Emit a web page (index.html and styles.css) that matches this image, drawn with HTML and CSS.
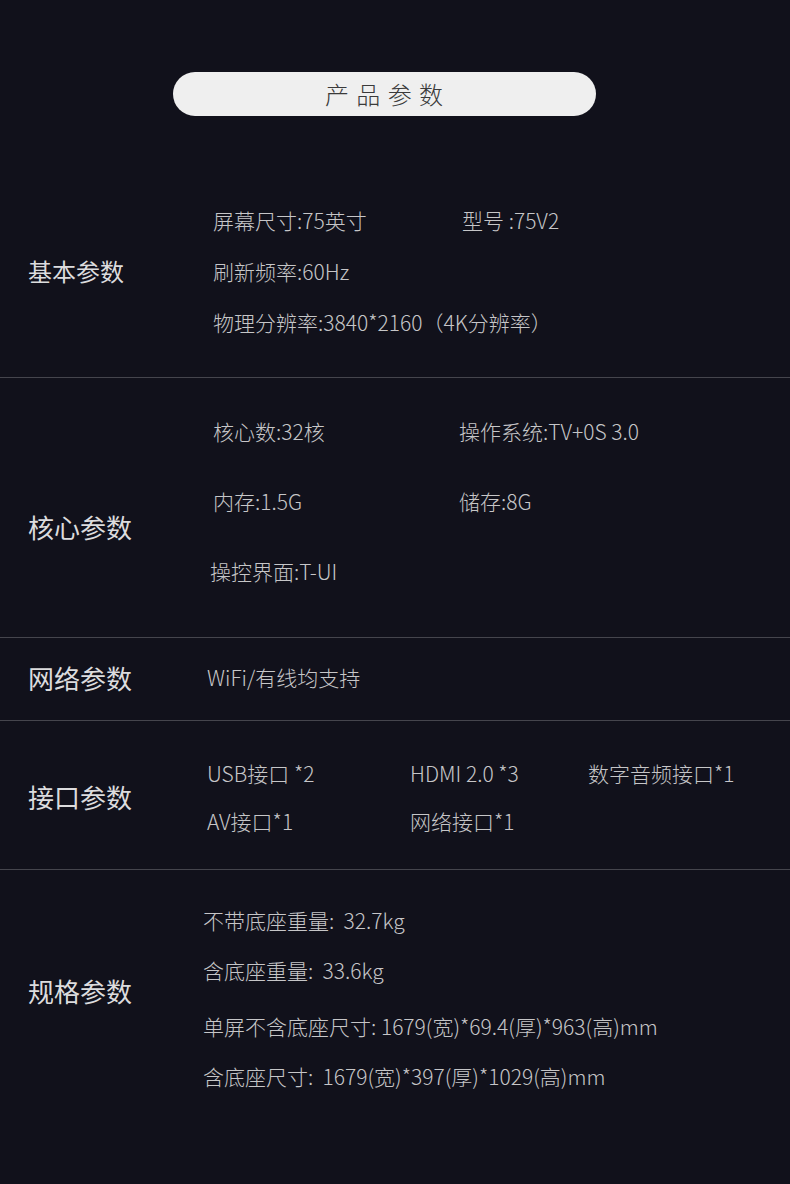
FILE: index.html
```html
<!DOCTYPE html>
<html lang="zh-CN">
<head>
<meta charset="utf-8">
<title>产品参数</title>
<link rel="stylesheet" href="styles.css">
</head>
<body>
<div class="page">
  <div class="pill">产 品 参 数</div>

  <section class="sec sec-basic">
    <div class="label label-sm">基本参数</div>
    <div class="content grid-basic">
      <div class="val">屏幕尺寸:75英寸</div>
      <div class="val">型号 :75V2</div>
      <div class="val span2">刷新频率:60Hz</div>
      <div class="val span2">物理分辨率:3840*2160（4K分辨率）</div>
    </div>
  </section>

  <section class="sec sec-core">
    <div class="label">核心参数</div>
    <div class="content grid-core">
      <div class="val">核心数:32核</div>
      <div class="val">操作系统:TV+0S 3.0</div>
      <div class="val">内存:1.5G</div>
      <div class="val">储存:8G</div>
      <div class="val span2 shift-l">操控界面:T-UI</div>
    </div>
  </section>

  <section class="sec sec-net">
    <div class="label">网络参数</div>
    <div class="content">
      <div class="val">WiFi/有线均支持</div>
    </div>
  </section>

  <section class="sec sec-port">
    <div class="label">接口参数</div>
    <div class="content grid-port">
      <div class="val">USB接口 *2</div>
      <div class="val">HDMI 2.0 *3</div>
      <div class="val">数字音频接口*1</div>
      <div class="val">AV接口*1</div>
      <div class="val">网络接口*1</div>
    </div>
  </section>

  <section class="sec sec-spec">
    <div class="label">规格参数</div>
    <div class="content list-spec">
      <div class="val">不带底座重量:&nbsp;&nbsp;32.7kg</div>
      <div class="val">含底座重量:&nbsp;&nbsp;33.6kg</div>
      <div class="val gap-top">单屏不含底座尺寸: 1679(宽)*69.4(厚)*963(高)mm</div>
      <div class="val">含底座尺寸:&nbsp;&nbsp;1679(宽)*397(厚)*1029(高)mm</div>
    </div>
  </section>
</div>
</body>
</html>
```

FILE: styles.css
```css
html, body {
  margin: 0;
  padding: 0;
  background: #11111b;
}

body {
  font-family: "Noto Sans CJK SC", "Noto Sans", sans-serif;
  color: #c6c6c8;
}

.page {
  width: 790px;
  min-height: 1184px;
  padding-top: 72px;
  box-sizing: border-box;
}

.pill {
  margin-left: 173px;
  width: 423px;
  height: 44px;
  border-radius: 22px;
  background: #efefef;
  color: #3a3a3a;
  font-size: 24px;
  font-weight: 300;
  line-height: 44px;
  text-align: center;
  letter-spacing: 1px;
}

.sec {
  display: flex;
  align-items: center;
  border-bottom: 1px solid #45454d;
}

.label {
  width: 179px;
  padding-left: 28px;
  flex: none;
  font-size: 26px;
  font-weight: 400;
  color: #dcdcde;
  line-height: 36px;
}

.label-sm {
  font-size: 24px;
}

.content {
  flex: 1;
}

.val {
  font-size: 21px;
  font-weight: 300;
  white-space: nowrap;
}

.span2 {
  grid-column: 1 / span 2;
}

/* 基本参数 */
.sec-basic {
  padding: 78px 0 30px;
}
.grid-basic {
  padding-left: 6px;
  display: grid;
  grid-template-columns: 249px auto;
  grid-auto-rows: 51px;
  align-items: center;
}

/* 核心参数 */
.sec-core {
  padding: 18px 0 31px;
}
.sec-core .label {
  padding-top: 52px;
}
.grid-core {
  padding-left: 6px;
  display: grid;
  grid-template-columns: 246px auto;
  grid-auto-rows: 70px;
  align-items: center;
}
.shift-l {
  margin-left: -3px;
}

/* 网络参数 */
.sec-net {
  padding: 14px 0 17px;
}
.sec-net .val {
  line-height: 51px;
}

/* 接口参数 */
.sec-port {
  padding: 28px 0 24px;
}
.grid-port {
  display: grid;
  grid-template-columns: 203px 178px auto;
  grid-auto-rows: 48px;
  align-items: center;
}

/* 规格参数 */
.sec-spec {
  padding: 25px 0 40px;
  border-bottom: none;
}
.sec-spec .label {
  padding-bottom: 14px;
}
.list-spec {
  margin-left: -4px;
}
.list-spec .val {
  line-height: 50px;
}
.list-spec .gap-top {
  margin-top: 6px;
}
```
